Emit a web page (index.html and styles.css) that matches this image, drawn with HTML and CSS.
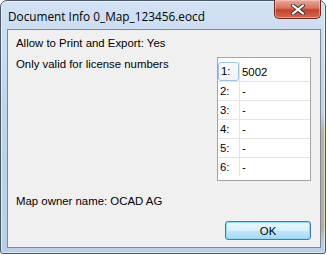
FILE: index.html
```html
<!DOCTYPE html>
<html lang="en">
<head>
  <meta charset="UTF-8">
  <title>Document Info</title>
  <link rel="stylesheet" href="styles.css">
</head>
<body>

  <div class="window">
    <div class="titlebar">
      <span class="title">Document Info 0_Map_123456.eocd</span>
      <button class="close-btn" title="Close">
        <svg width="14" height="11" viewBox="0 0 14 11">
          <path d="M2 1.5 L12 9.5 M12 1.5 L2 9.5" stroke="#3a3a3a" stroke-width="4" stroke-linecap="round"/>
          <path d="M2 1.5 L12 9.5 M12 1.5 L2 9.5" stroke="#fff" stroke-width="2.2" stroke-linecap="round"/>
        </svg>
      </button>
    </div>

    <div class="client">
      <div class="line">Allow to Print and Export: Yes</div>

      <div class="middle">
        <div class="line license-label">Only valid for license numbers</div>
        <div class="grid-box">
          <table class="grid">
            <tr><td class="num"><span class="focus">1:</span></td><td>5002</td></tr>
            <tr><td class="num">2:</td><td>-</td></tr>
            <tr><td class="num">3:</td><td>-</td></tr>
            <tr><td class="num">4:</td><td>-</td></tr>
            <tr><td class="num">5:</td><td>-</td></tr>
            <tr><td class="num">6:</td><td>-</td></tr>
          </table>
        </div>
      </div>

      <div class="line owner">Map owner name: OCAD AG</div>

      <div class="buttons">
        <button class="ok-btn">OK</button>
      </div>
    </div>
  </div>

</body>
</html>
```

FILE: styles.css
```css
body {
  margin: 0;
  background: #fff;
  font-family: "Liberation Sans", Arial, sans-serif;
}

.window {
  box-sizing: border-box;
  width: 326px;
  height: 254px;
  border: 1px solid #4a5866;
  border-radius: 7px 7px 3px 3px;
  background:
    linear-gradient(to bottom, transparent 44%, #b9b698 52%, #b4b08f 90%, transparent 96%) right top / 4px 100% no-repeat,
    linear-gradient(to bottom, #d2e2f4, #c0d5ec 40%, #b9cfe8);
  box-shadow: inset 0 0 0 1px rgba(255, 255, 255, 0.55);
  display: flex;
  flex-direction: column;
}

.titlebar {
  height: 28px;
  display: flex;
  align-items: flex-start;
  padding-left: 7px;
  padding-right: 4px;
}

.title {
  font-family: "Open Sans", sans-serif;
  font-size: 11.8px;
  line-height: 16px;
  margin-top: 7px;
  color: #000;
}

.close-btn {
  margin-left: auto;
  margin-top: -1px;
  width: 47px;
  height: 19px;
  padding: 0;
  border: 1px solid #6b2a1e;
  border-top: none;
  border-radius: 0 0 5px 5px;
  background: linear-gradient(to bottom, #e9a99a, #d8735e 45%, #c4422a 55%, #d66a4f);
  box-shadow: inset 0 0 0 1px rgba(255, 220, 210, 0.45);
  display: flex;
  align-items: center;
  justify-content: center;
}

.client {
  box-sizing: border-box;
  margin: 0 4px 0 6px;
  height: 219px;
  border: 1px solid #7a8898;
  background: #f0f0f0;
  padding: 7px 9px 0 8px;
  color: #000;
  font-size: 11.4px;
}

.line {
  line-height: 13px;
  height: 13px;
}

.middle {
  display: flex;
  justify-content: space-between;
  margin-top: 7px;
}

.license-label {
  margin-top: 1px;
}

.grid-box {
  box-sizing: border-box;
  width: 94px;
  height: 124px;
  border: 1px solid #a5a5a5;
  background: #fff;
  padding-top: 4px;
}

.grid {
  border-collapse: collapse;
  width: 92px;
}

.grid td {
  height: 18px;
  padding: 0 0 0 2px;
  border-bottom: 1px solid #e4e4e4;
  line-height: 18px;
  vertical-align: middle;
}

.grid tr:last-child td {
  border-bottom: none;
}

.grid td.num {
  width: 19px;
  border-right: 1px solid #e4e4e4;
}

.focus {
  display: inline-block;
  margin-left: -2px;
  padding-left: 2px;
  width: 17px;
  height: 17px;
  border: 1px solid #9dc3e8;
  border-radius: 3px;
  background: linear-gradient(to bottom, #f8fbfe, #eef5fc);
  line-height: 17px;
}

.owner {
  margin-top: 14px;
}

.buttons {
  display: flex;
  justify-content: flex-end;
  margin-top: 13px;
}

.ok-btn {
  width: 86px;
  height: 19px;
  padding: 0;
  border: 1px solid #3c7fb1;
  border-radius: 3px;
  background: linear-gradient(to bottom, #eaf6fd, #d9f0fc 50%, #bee6fd 51%, #a7d9f5);
  box-shadow: inset 0 0 0 1px #8fd8f8;
  font-family: "Liberation Sans", Arial, sans-serif;
  font-size: 11.4px;
  color: #000;
}
```
